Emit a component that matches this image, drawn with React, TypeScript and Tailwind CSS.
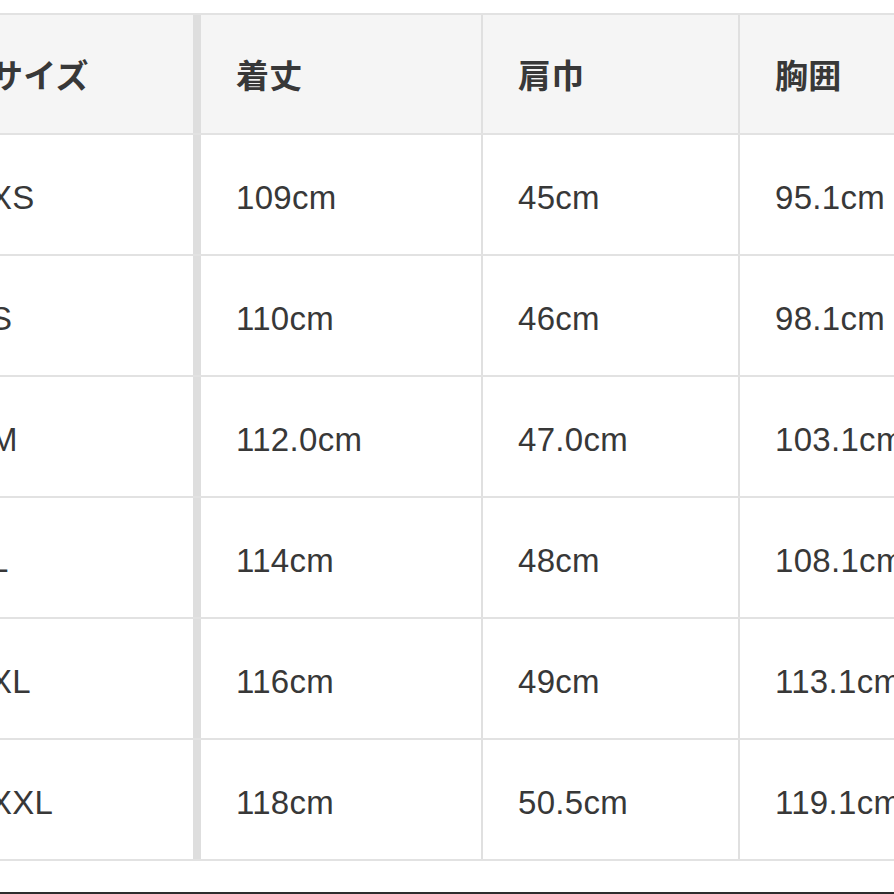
const headers = ["サイズ", "着丈", "肩巾", "胸囲"];

const rows = [
  ["XS", "109cm", "45cm", "95.1cm"],
  ["S", "110cm", "46cm", "98.1cm"],
  ["M", "112.0cm", "47.0cm", "103.1cm"],
  ["L", "114cm", "48cm", "108.1cm"],
  ["XL", "116cm", "49cm", "113.1cm"],
  ["XXL", "118cm", "50.5cm", "119.1cm"],
];

function Row({ cells, head }: { cells: string[]; head?: boolean }) {
  const cell = "flex items-center pl-[35px] pt-[6px]";
  return (
    <div
      className={
        "flex border-b-2 border-[#e2e2e2] " +
        (head ? "h-[120px] bg-[#f5f5f5] font-bold" : "h-[121px] bg-white")
      }
    >
      <div className={cell + " w-[238px] shrink-0"}>{cells[0]}</div>
      <div className="w-[8px] shrink-0 bg-[#dedede]" />
      <div className={cell + " w-[282px] shrink-0 border-r-2 border-[#e0e0e0]"}>{cells[1]}</div>
      <div className={cell + " w-[257px] shrink-0 border-r-2 border-[#e0e0e0]"}>{cells[2]}</div>
      <div className={cell + " w-[260px] shrink-0"}>{cells[3]}</div>
    </div>
  );
}

export default function App() {
  return (
    <div className="relative h-[894px] w-[894px] overflow-hidden bg-white">
      <div
        className="ml-[-45px] mt-[13px] w-[1060px] border-t-2 border-[#e2e2e2] text-[33px] tracking-[0.3px] text-[#383838]"
        style={{ fontFamily: '"Liberation Sans", Arial, "Noto Sans CJK JP", sans-serif' }}
      >
        <Row cells={headers} head />
        {rows.map((r) => (
          <Row key={r[0]} cells={r} />
        ))}
      </div>
      <div className="absolute bottom-0 left-0 h-[2px] w-full bg-[#2e2e2e]" />
    </div>
  );
}
